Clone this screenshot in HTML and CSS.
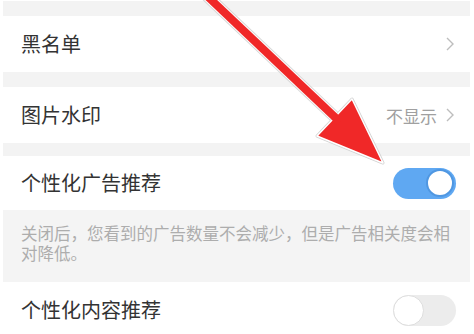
FILE: index.html
```html
<!DOCTYPE html>
<html lang="zh-CN">
<head>
<meta charset="utf-8">
<title>设置</title>
<link rel="stylesheet" href="styles.css">
</head>
<body>
<div class="page">
  <div class="sep sep-top"></div>
  <div class="row">
    <span class="label">黑名单</span>
    <span class="right">
      <svg class="chev" viewBox="0 0 8 14" width="8" height="14"><polyline points="1,1 7,7 1,13" fill="none" stroke="#bdbdbd" stroke-width="1.4"/></svg>
    </span>
  </div>
  <div class="sep"></div>
  <div class="row">
    <span class="label">图片水印</span>
    <span class="right">
      <span class="value">不显示</span>
      <svg class="chev" viewBox="0 0 8 14" width="8" height="14"><polyline points="1,1 7,7 1,13" fill="none" stroke="#bdbdbd" stroke-width="1.4"/></svg>
    </span>
  </div>
  <div class="sep sep-short"></div>
  <div class="row row-short">
    <span class="label">个性化广告推荐</span>
    <span class="toggle on"><span class="knob"></span></span>
  </div>
  <div class="desc">关闭后，您看到的广告数量不会减少，但是广告相关度会相对降低。</div>
  <div class="row">
    <span class="label">个性化内容推荐</span>
    <span class="toggle off"><span class="knob"></span></span>
  </div>

  <svg class="arrow" viewBox="0 0 474 334" width="474" height="334">
    <line x1="205" y1="-6" x2="338" y2="120" stroke="#d6d6d6" stroke-width="12" />
    <line x1="205" y1="-6" x2="338" y2="120" stroke="#ffffff" stroke-width="10" />
    <polygon points="352,99 317,136 383,163" fill="#f02828" stroke="#d2d2d2" stroke-width="3" stroke-linejoin="round"/>
    <polygon points="352,99 317,136 383,163" fill="#f02828" stroke="#ffffff" stroke-width="1.5" stroke-linejoin="round"/>
    <line x1="205" y1="-6" x2="340" y2="122" stroke="#f02828" stroke-width="8" />
  </svg>
</div>
</body>
</html>
```
FILE: styles.css
```css
* { box-sizing: border-box; }
html, body {
  margin: 0;
  padding: 0;
  background: #ffffff;
}
body {
  font-family: "Noto Sans CJK SC", "Noto Sans", sans-serif;
  color: #333333;
  width: 474px;
  height: 334px;
  overflow: hidden;
}
.page {
  position: relative;
  padding: 1px 4px 0 3px;
}
.sep {
  height: 15px;
  background: #f3f3f3;
}
.sep-short {
  height: 13px;
}
.row {
  height: 56px;
  display: flex;
  align-items: center;
  justify-content: space-between;
  padding: 0 16px 0 18px;
  background: #ffffff;
}
.row-short {
  height: 54px;
}
.label {
  font-size: 20px;
  line-height: 1;
  color: #333333;
}
.right {
  display: flex;
  align-items: center;
  gap: 9px;
}
.value {
  font-size: 17px;
  line-height: 1;
  color: #a0a0a0;
}
.chev {
  display: block;
}
.toggle {
  width: 63px;
  height: 31px;
  border-radius: 16px;
  display: flex;
  align-items: center;
  padding: 0 2px;
  margin-right: -2px;
}
.toggle .knob {
  width: 28px;
  height: 28px;
  border-radius: 50%;
  background: #ffffff;
}
.toggle.on {
  background: #5fa8f2;
  justify-content: flex-end;
}
.toggle.on .knob {
  border: 2px solid #4f97e2;
}
.toggle.off {
  background: #ececec;
  justify-content: flex-start;
  padding: 0;
}
.toggle.off .knob {
  width: 31px;
  height: 31px;
  border: 1.5px solid #dedede;
}
.desc {
  height: 72px;
  background: #f4f4f4;
  padding: 13px 4px 0 18px;
  font-size: 16.5px;
  line-height: 20px;
  color: #adadad;
}
.arrow {
  position: absolute;
  left: 0;
  top: 0;
  pointer-events: none;
}
```
